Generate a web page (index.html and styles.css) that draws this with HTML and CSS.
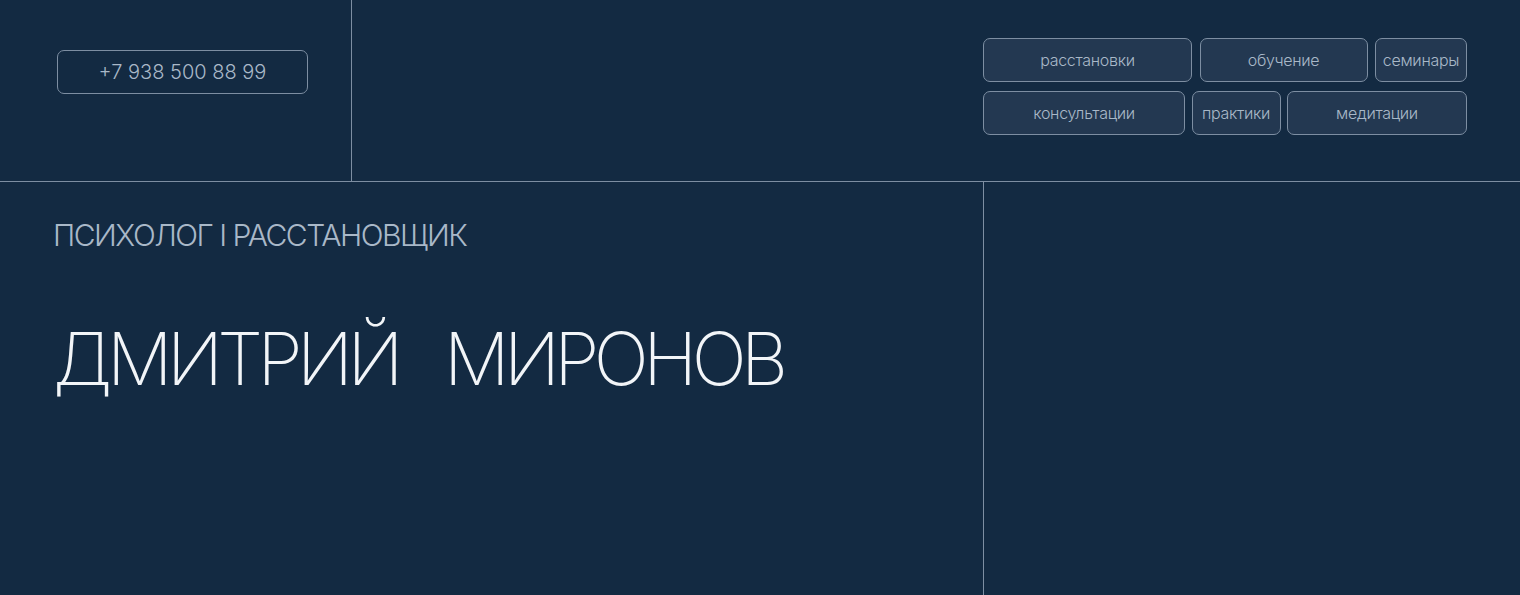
FILE: index.html
```html
<!DOCTYPE html>
<html lang="ru">

<head>
    <meta charset="UTF-8">
    <meta name="viewport" content="width=device-width, initial-scale=1.0">
    <title>Дмитрий Миронов — психолог</title>
    <link rel="stylesheet" href="styles.css">
</head>

<body>
    <header class="top">
        <div class="top-left">
            <a class="phone" href="tel:+79385008899">+7 938 500 88 99</a>
        </div>
        <nav class="menu">
            <div class="menu-row">
                <a class="menu-btn w-208" href="#">расстановки</a>
                <a class="menu-btn w-167" href="#">обучение</a>
                <a class="menu-btn w-91" href="#">семинары</a>
            </div>
            <div class="menu-row">
                <a class="menu-btn w-201" href="#">консультации</a>
                <a class="menu-btn w-88" href="#">практики</a>
                <a class="menu-btn w-179" href="#">медитации</a>
            </div>
        </nav>
    </header>
    <main class="hero">
        <div class="hero-text">
            <p class="role">ПСИХОЛОГ I РАССТАНОВЩИК</p>
            <h1 class="name">ДМИТРИЙ&nbsp;&nbsp;МИРОНОВ</h1>
        </div>
        <div class="hero-side"></div>
    </main>
</body>

</html>
```

FILE: styles.css
```css
:root {
    --bg: #132a42;
    --line: #7d8ea2;
    --btn-bg: #233851;
    --btn-text: #a9b8c8;
}

* {
    box-sizing: border-box;
}

body {
    margin: 0;
    height: 100vh;
    background-color: var(--bg);
    font-family: Inter, "Noto Sans", sans-serif;
    color: #f2f5f8;
    overflow: hidden;
}

a {
    text-decoration: none;
}

/* ---------- header */
.top {
    display: flex;
    height: 182px;
    border-bottom: 1px solid var(--line);
}

.top-left {
    width: 352px;
    border-right: 1px solid var(--line);
    padding: 50px 0 0 57px;
}

.phone {
    display: flex;
    justify-content: center;
    align-items: center;
    width: 251px;
    height: 44px;
    border: 1px solid var(--line);
    border-radius: 7px;
    color: var(--btn-text);
    font-size: 20px;
    font-weight: 300;
}

.menu {
    margin-left: auto;
    padding: 38px 53px 0 0;
    display: flex;
    flex-direction: column;
    gap: 9px;
}

.menu-row {
    display: flex;
    justify-content: space-between;
    width: 484px;
}

.menu-btn {
    display: flex;
    justify-content: center;
    align-items: center;
    height: 44px;
    background-color: var(--btn-bg);
    border: 1px solid var(--line);
    border-radius: 7px;
    color: var(--btn-text);
    font-size: 16px;
    font-weight: 300;
    letter-spacing: -0.3px;
}

.w-208 { width: 209px; }
.w-167 { width: 168px; }
.w-91 { width: 92px; }
.w-201 { width: 202px; }
.w-88 { width: 89px; }
.w-179 { width: 180px; }

/* ---------- hero */
.hero {
    display: flex;
    height: calc(100vh - 182px);
}

.hero-text {
    width: 984px;
    border-right: 1px solid var(--line);
    padding-left: 53px;
}

.role {
    margin: 38px 0 0;
    font-size: 30px;
    line-height: 30px;
    font-weight: 300;
    color: #a9b8c8;
    letter-spacing: -1.5px;
}

.name {
    margin: 72px 0 0;
    font-size: 73px;
    font-weight: 200;
    line-height: 1;
    letter-spacing: -5.5px;
    word-spacing: 8px;
}
```
